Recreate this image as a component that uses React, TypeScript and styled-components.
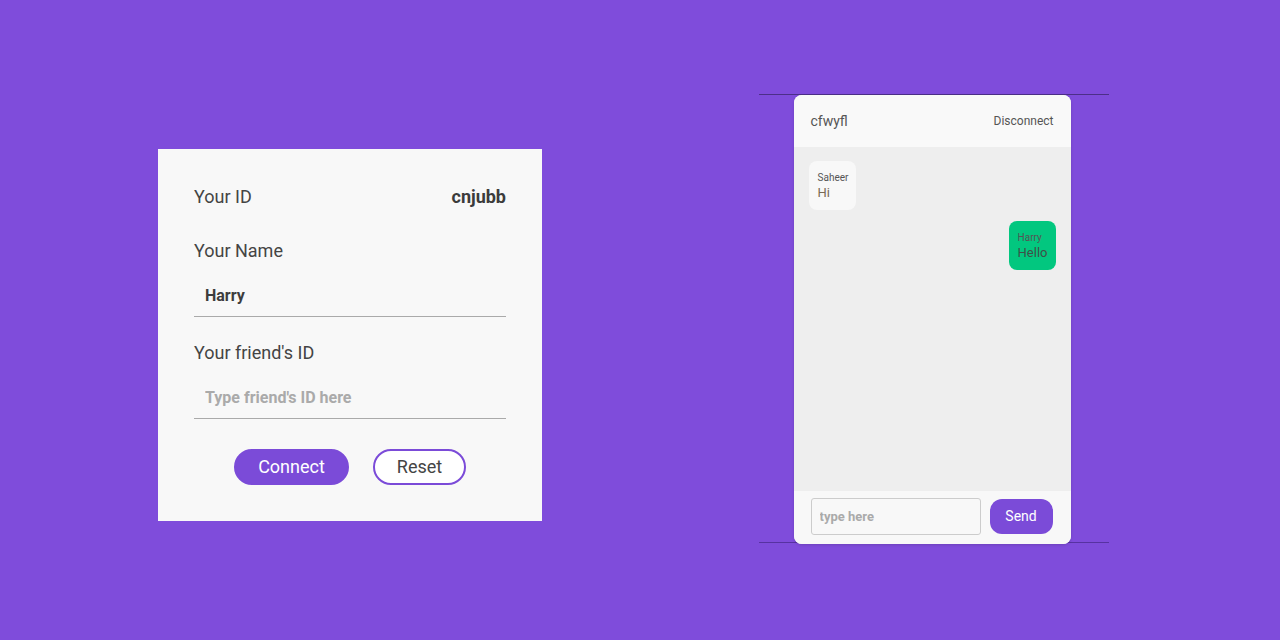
import React from "react";
import styled, { createGlobalStyle } from "styled-components";

const Global = createGlobalStyle`
  html, body { margin: 0; padding: 0; background: #7f4cdb; }
  body { font-family: Roboto, "Noto Sans", sans-serif; }
  * { box-sizing: border-box; }
`;

const Page = styled.div`
  width: 1280px;
  height: 640px;
  display: flex;
  align-items: flex-start;
  padding-left: 158px;
  gap: 217px;
  background: #7f4cdb;
`;

const LoginCard = styled.div`
  margin-top: 149px;
  width: 384px;
  height: 372px;
  background: #f8f8f8;
  padding: 36px;
  display: flex;
  flex-direction: column;
  color: #444;
`;

const IdRow = styled.div`
  display: flex;
  justify-content: space-between;
  align-items: center;
  height: 24px;
  font-size: 18px;
  line-height: 24px;
`;

const IdValue = styled.span`
  font-weight: 700;
  color: #3b3b3b;
`;

const Label = styled.div<{ $mt: number }>`
  margin-top: ${(p) => p.$mt}px;
  font-size: 18px;
  line-height: 24px;
  height: 24px;
  color: #444;
`;

const Field = styled.input`
  margin-top: 12px;
  width: 100%;
  height: 42px;
  border: none;
  border-bottom: 1px solid #aaa;
  background: transparent;
  padding: 0 11px;
  font-family: Roboto, sans-serif;
  font-size: 16px;
  font-weight: 700;
  color: #3d3d3d;
  outline: none;
  &::placeholder { color: #aaa; opacity: 1; }
`;

const ButtonRow = styled.div`
  margin-top: 30px;
  display: flex;
  justify-content: center;
  gap: 24px;
`;

const PillButton = styled.button<{ $primary?: boolean }>`
  height: 36px;
  width: ${(p) => (p.$primary ? 115 : 93)}px;
  border-radius: 18px;
  border: 2px solid #7b4bd8;
  background: ${(p) => (p.$primary ? "#7b4bd8" : "#fff")};
  color: ${(p) => (p.$primary ? "#fff" : "#444")};
  font-family: Roboto, sans-serif;
  font-size: 18px;
  padding: 0 0 1px;
  cursor: pointer;
`;

const ChatFrame = styled.div`
  margin-top: 94px;
  width: 350px;
  height: 449px;
  border-top: 1px solid #4c2f88;
  border-bottom: 1px solid rgba(40, 20, 90, 0.45);
  display: flex;
  justify-content: center;
`;

const ChatCard = styled.div`
  width: 277px;
  height: 449px;
  margin-left: -4px;
  background: #f8f8f8;
  border-radius: 8px;
  overflow: hidden;
  display: flex;
  flex-direction: column;
  box-shadow: 0 1px 3px rgba(0, 0, 0, 0.15);
`;

const ChatHeader = styled.div`
  height: 52px;
  padding: 0 17px;
  display: flex;
  align-items: center;
  justify-content: space-between;
  background: #f9f9f9;
  color: #555;
`;

const PeerId = styled.span`
  font-size: 14px;
`;

const Disconnect = styled.span`
  font-size: 12px;
`;

const Messages = styled.div`
  flex: 1;
  background: #eeeeee;
  padding: 14px 15px;
  display: flex;
  flex-direction: column;
  gap: 11px;
`;

const Bubble = styled.div<{ $mine?: boolean }>`
  align-self: ${(p) => (p.$mine ? "flex-end" : "flex-start")};
  background: ${(p) => (p.$mine ? "#02c77f" : "#f8f8f8")};
  border-radius: 8px;
  padding: 11px 8px 8px 9px;
  height: 49px;
  color: #555;
`;

const Sender = styled.div`
  font-size: 10px;
  line-height: 12px;
`;

const Text = styled.div<{ $mine?: boolean }>`
  font-size: 13px;
  line-height: 18px;
  color: ${(p) => (p.$mine ? "#3f4f48" : "#7a6a55")};
`;

const Footer = styled.div`
  height: 53px;
  padding: 0 17px 2px;
  display: flex;
  align-items: center;
  gap: 9px;
  background: #f8f8f8;
`;

const ChatInput = styled.input`
  width: 170px;
  height: 37px;
  border: 1px solid #ccc;
  border-radius: 3px;
  background: #f8f8f8;
  padding: 0 8px;
  font-family: Roboto, sans-serif;
  font-size: 13px;
  font-weight: 700;
  outline: none;
  &::placeholder { color: #aaa; opacity: 1; }
`;

const SendButton = styled.button`
  width: 63px;
  height: 35px;
  border: none;
  border-radius: 12px;
  background: #7b4bd8;
  color: #fff;
  font-family: Roboto, sans-serif;
  font-size: 14px;
  padding: 0 0 2px;
`;

export default function App() {
  return (
    <>
      <Global />
      <Page>
        <LoginCard>
          <IdRow>
            <span>Your ID</span>
            <IdValue>cnjubb</IdValue>
          </IdRow>
          <Label $mt={30}>Your Name</Label>
          <Field defaultValue="Harry" />
          <Label $mt={24}>Your friend's ID</Label>
          <Field placeholder="Type friend's ID here" />
          <ButtonRow>
            <PillButton $primary>Connect</PillButton>
            <PillButton>Reset</PillButton>
          </ButtonRow>
        </LoginCard>
        <ChatFrame>
          <ChatCard>
            <ChatHeader>
              <PeerId>cfwyfl</PeerId>
              <Disconnect>Disconnect</Disconnect>
            </ChatHeader>
            <Messages>
              <Bubble>
                <Sender>Saheer</Sender>
                <Text>Hi</Text>
              </Bubble>
              <Bubble $mine>
                <Sender>Harry</Sender>
                <Text $mine>Hello</Text>
              </Bubble>
            </Messages>
            <Footer>
              <ChatInput placeholder="type here" />
              <SendButton>Send</SendButton>
            </Footer>
          </ChatCard>
        </ChatFrame>
      </Page>
    </>
  );
}
